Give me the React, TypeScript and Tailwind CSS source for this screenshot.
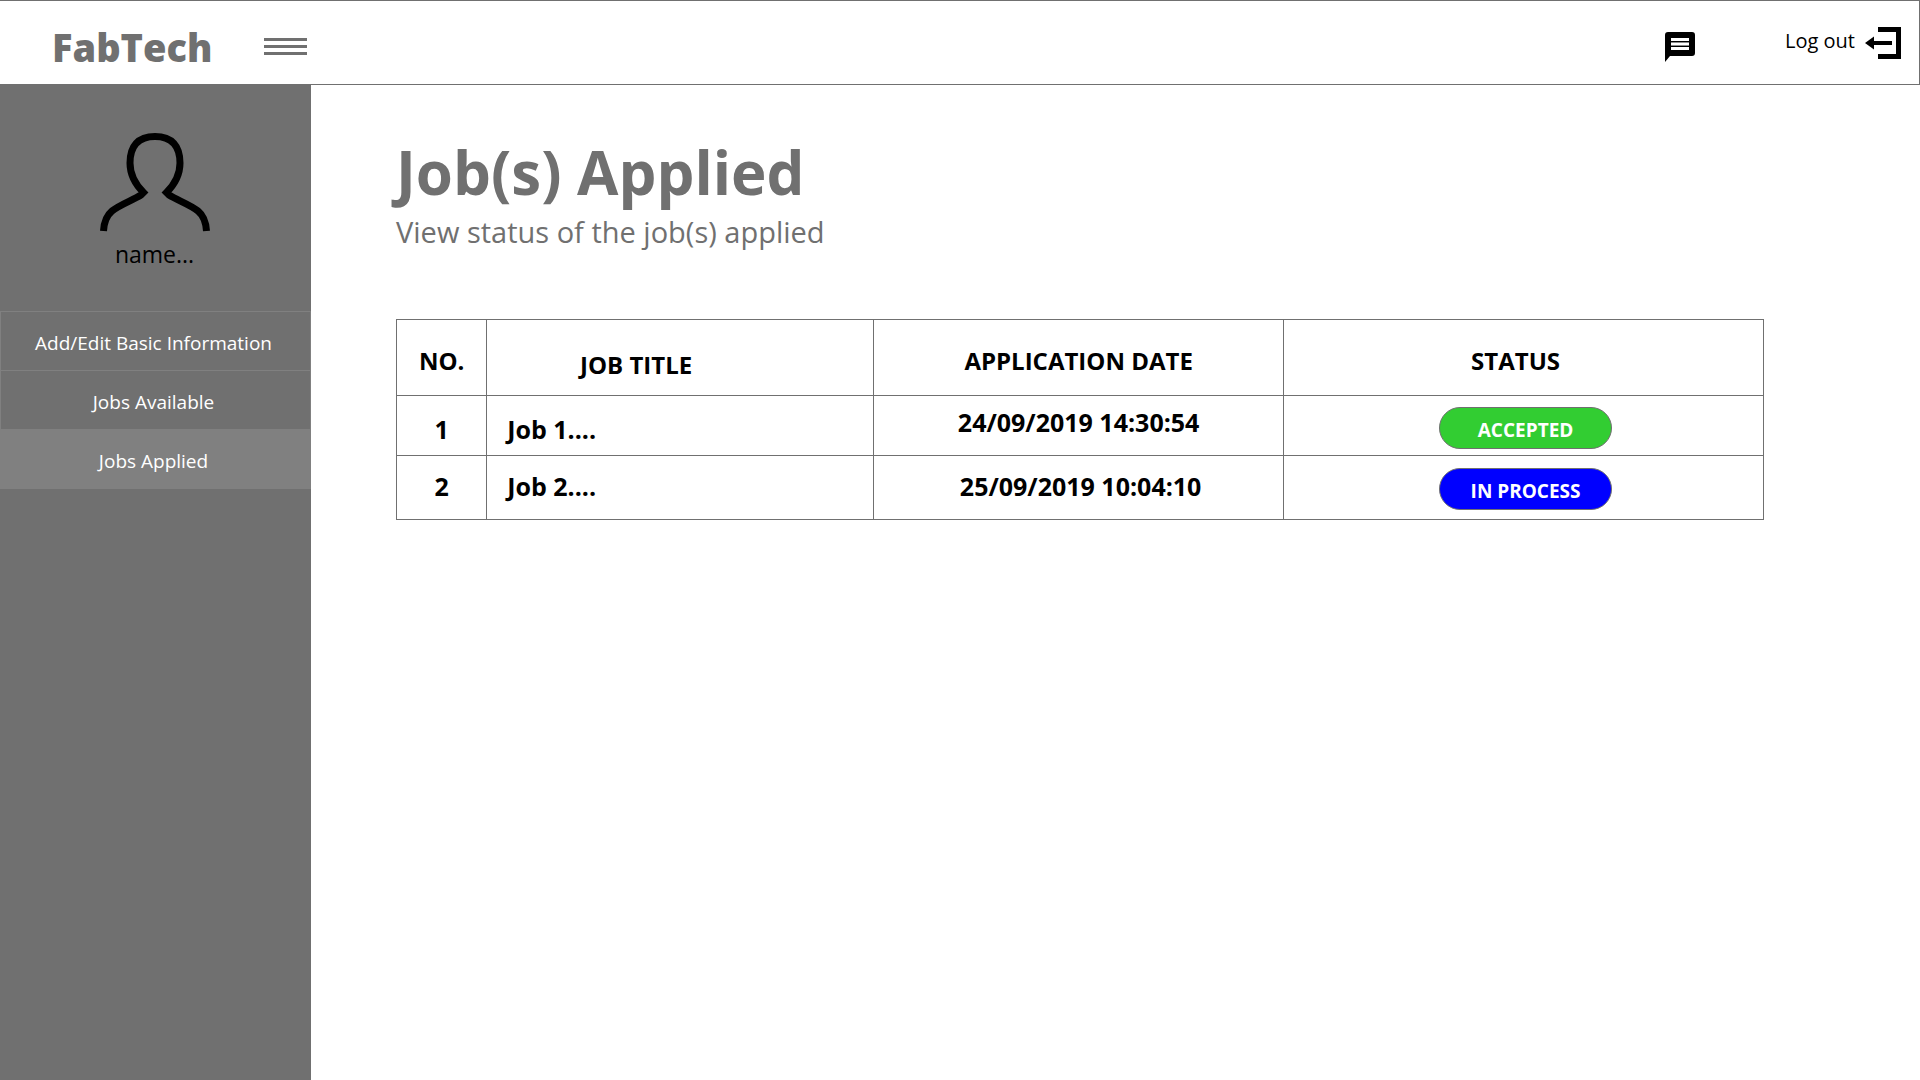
import React from "react";

type Status = "ACCEPTED" | "IN PROCESS";

interface Job {
  no: number;
  title: string;
  date: string;
  status: Status;
}

const jobs: Job[] = [
  { no: 1, title: "Job 1....", date: "24/09/2019 14:30:54", status: "ACCEPTED" },
  { no: 2, title: "Job 2....", date: "25/09/2019 10:04:10", status: "IN PROCESS" },
];

const navItems = [
  { label: "Add/Edit Basic Information", active: false },
  { label: "Jobs Available", active: false },
  { label: "Jobs Applied", active: true },
];

function MessageIcon() {
  return (
    <svg viewBox="0 0 30 30" className="size-[30px]" aria-hidden="true">
      <path d="M3 0h24a3 3 0 0 1 3 3v18a3 3 0 0 1-3 3H5l-5 6V3a3 3 0 0 1 3-3z" fill="#000" />
      <path d="M6 6h18v3H6zM6 15h18v3H6z" fill="#fff" />
      <path d="M6 10h18v4H6z" fill="#8a8a8a" />
      <path d="M6 11h18v2H6z" fill="#fff" />
    </svg>
  );
}

function LogOutIcon() {
  return (
    <svg viewBox="0 0 36 32" className="h-8 w-9" aria-hidden="true">
      <path d="M13 2.500H33.500V29.500H13" fill="none" stroke="#000" strokeWidth="5" />
      <path d="M0 16l9-6.500V14h18v4H9v4.500z" fill="#000" />
    </svg>
  );
}

function PersonIcon() {
  return (
    <svg viewBox="0 0 110 100" className="h-[100px] w-[110px]" aria-hidden="true">
      <path
        d="M3.500 99C4 91 6.500 83.500 12 79C19 73 33 68 41 63L43.500 60.500C34 51 30 42 30 31C30 14 38 4.500 55 4.500C72 4.500 80 14 80 31C80 42 76 51 66.500 60.500L69 63C77 68 91 73 98 79C103.500 83.500 106 91 106.500 99"
        fill="none"
        stroke="#000"
        strokeWidth="7"
      />
    </svg>
  );
}

function Header() {
  return (
    <header className="flex h-[85px] items-center border border-l-0 border-[#707070] bg-white">
      <div className="flex w-[311px] items-center justify-between pt-2 pl-[52px] pr-1">
        <a href="#home" className="text-[38px] leading-[52px] font-extrabold text-[#707070]">
          FabTech
        </a>
        <button type="button" aria-label="Toggle menu" className="flex w-[43px] flex-col gap-1">
          <span className="h-[3px] w-full bg-[#707070]" />
          <span className="h-[3px] w-full bg-[#707070]" />
          <span className="h-[3px] w-full bg-[#707070]" />
        </button>
      </div>
      <div className="ml-auto flex items-center gap-[90px] pr-[18px]">
        <button type="button" aria-label="Messages" className="pt-2">
          <MessageIcon />
        </button>
        <button type="button" className="flex items-center gap-[10px] text-[20px] leading-6">
          <span className="pb-1">Log out</span>
          <LogOutIcon />
        </button>
      </div>
    </header>
  );
}

function Sidebar() {
  return (
    <aside className="w-[311px] shrink-0 bg-[#707070]">
      <div className="flex h-[226px] flex-col items-center gap-2 pt-[47px] pr-[2px]">
        <PersonIcon />
        <p className="text-[23px] leading-7 text-black">name...</p>
      </div>
      <nav className="flex flex-col border border-t-0 border-[#808080]">
        {navItems.map((item) => (
          <a
            key={item.label}
            href="#"
            aria-current={item.active ? "page" : undefined}
            className={
              "flex h-[59px] items-center justify-center border-t border-[#808080] pt-1 pr-1 text-[19px] leading-6 text-white " +
              (item.active ? "bg-[#808080]" : "")
            }
          >
            {item.label}
          </a>
        ))}
      </nav>
    </aside>
  );
}

function StatusBadge({ status }: { status: Status }) {
  return (
    <span
      className={
        "inline-flex h-[42px] w-[173px] items-center justify-center rounded-full border border-[#707070] pt-1 text-[19px] leading-6 text-white " +
        (status === "ACCEPTED" ? "bg-[#32cd32]" : "bg-[#0000ff]")
      }
    >
      {status}
    </span>
  );
}

function JobsTable() {
  return (
    <table className="w-full table-fixed border-collapse text-[25px] leading-8 font-bold text-black [&_td]:border [&_td]:border-[#707070] [&_th]:border [&_th]:border-[#707070]">
      <colgroup>
        <col className="w-[6.6%]" />
        <col className="w-[28.3%]" />
        <col className="w-[30%]" />
        <col />
      </colgroup>
      <thead className="text-[24px]">
        <tr className="h-[76px]">
          <th scope="col" className="pt-1.5">NO.</th>
          <th scope="col" className="pt-3.5 pr-[88px]">JOB TITLE</th>
          <th scope="col" className="pt-1.5">APPLICATION DATE</th>
          <th scope="col" className="pt-1.5 pr-4">STATUS</th>
        </tr>
      </thead>
      <tbody>
        {jobs.map((job, index) => {
          const first = index === 0;
          return (
            <tr key={job.no} className={first ? "h-[60px]" : "h-16"}>
              <td className={"text-center " + (first ? "pt-1.5" : "pb-1")}>{job.no}</td>
              <td className={"pl-5 " + (first ? "pt-1.5" : "pb-1")}>{job.title}</td>
              <td className={"text-center " + (first ? "pb-2" : "pb-1 pl-1")}>{job.date}</td>
              <td className={first ? "pt-1" : "pt-0.5"}>
                <div className="flex justify-center pl-1">
                  <StatusBadge status={job.status} />
                </div>
              </td>
            </tr>
          );
        })}
      </tbody>
    </table>
  );
}

export default function App() {
  return (
    <div className="flex min-h-screen flex-col bg-white font-['Open_Sans',sans-serif]">
      <Header />
      <div className="flex flex-1">
        <Sidebar />
        <main className="flex-1 pt-[47px] pr-[156px] pl-[85px] text-[#707070]">
          <h1 className="text-[60px] leading-[80px] font-bold">Job(s) Applied</h1>
          <p className="text-[29px] leading-10">View status of the job(s) applied</p>
          <div className="pt-[67px]">
            <JobsTable />
          </div>
        </main>
      </div>
    </div>
  );
}
